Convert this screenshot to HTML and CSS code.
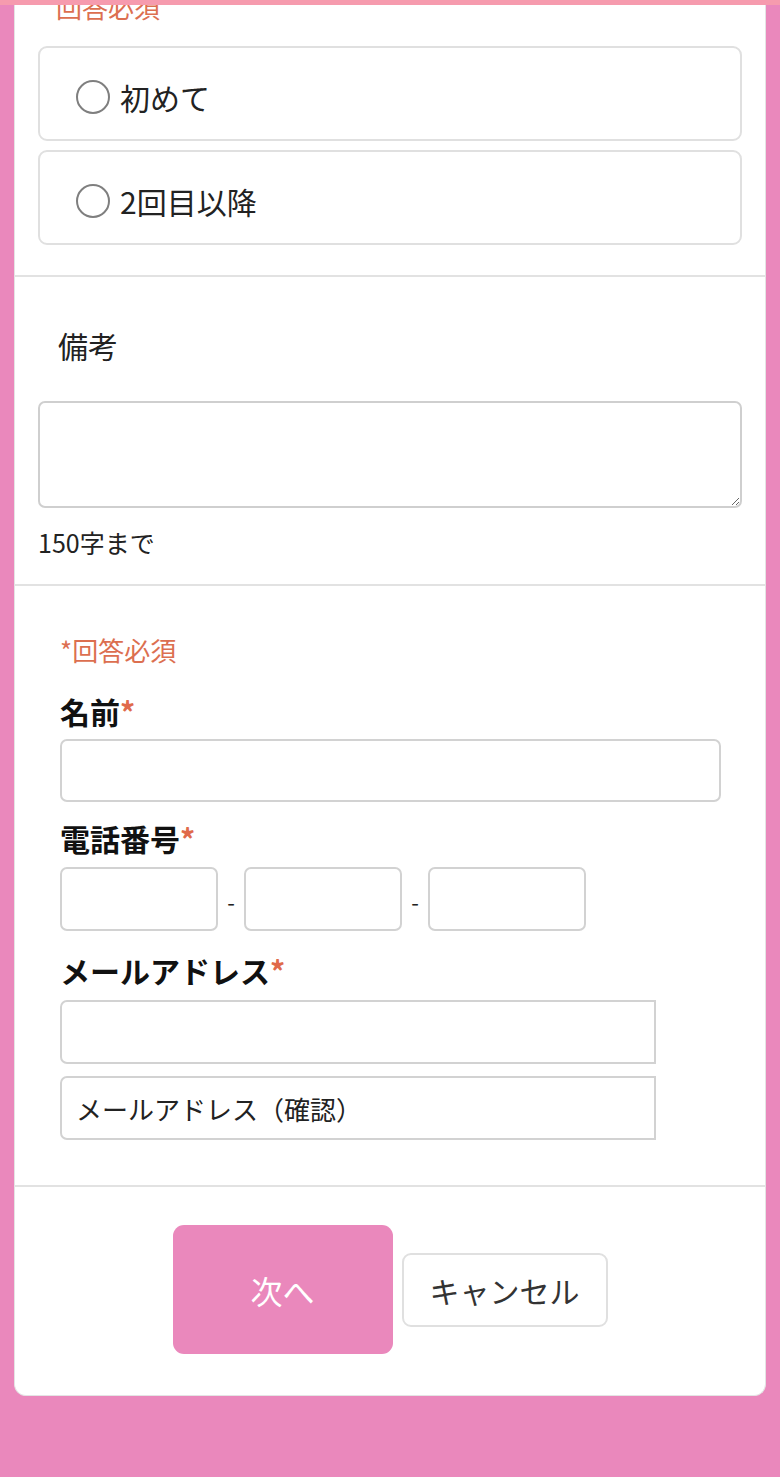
FILE: index.html
```html
<!DOCTYPE html>
<html lang="ja">
<head>
<meta charset="utf-8">
<title>フォーム</title>
<link rel="stylesheet" href="styles.css">
</head>
<body>
<div class="topbar"></div>
<main class="card">
  <section class="sec sec-options">
    <p class="req-note req-top">回答必須</p>
    <div class="options">
      <label class="option"><input type="radio" name="visit" class="radio"><span class="opt-text">初めて</span></label>
      <label class="option"><input type="radio" name="visit" class="radio"><span class="opt-text">2回目以降</span></label>
    </div>
  </section>
  <section class="sec sec-note">
    <p class="note-label">備考</p>
    <textarea class="textarea"></textarea>
    <p class="hint">150字まで</p>
  </section>
  <section class="sec sec-contact">
    <p class="req-note">*回答必須</p>
    <p class="field-label label-name">名前<span class="star">*</span></p>
    <input class="input input-full" type="text">
    <p class="field-label label-tel">電話番号<span class="star">*</span></p>
    <div class="tel-row">
      <input class="input input-tel" type="text">
      <span class="dash">-</span>
      <input class="input input-tel" type="text">
      <span class="dash">-</span>
      <input class="input input-tel" type="text">
    </div>
    <p class="field-label label-mail">メールアドレス<span class="star">*</span></p>
    <input class="input input-mail" type="text">
    <input class="input input-mail input-mail2" type="text" placeholder="メールアドレス（確認）">
  </section>
  <section class="sec sec-actions">
    <button class="btn btn-next" type="button">次へ</button>
    <button class="btn btn-cancel" type="button">キャンセル</button>
  </section>
</main>
</body>
</html>
```

FILE: styles.css
```css
* { box-sizing: border-box; }
html, body { margin: 0; padding: 0; }
body {
  background: #ea88bc;
  font-family: "Noto Sans CJK JP", "Noto Sans", sans-serif;
  color: #222;
  height: 1477px;
  overflow: hidden;
}
p { margin: 0; }
.topbar {
  position: fixed;
  top: 0; left: 0; right: 0;
  height: 5px;
  background: #f69bae;
  z-index: 5;
}
.card {
  margin: -30px 14px 0 14px;
  background: #fff;
  border-left: 1px solid #e4e4e4;
  border-right: 1px solid #e4e4e4;
  border-bottom: 1px solid #e4e4e4;
  border-radius: 0 0 12px 12px;
}
.sec { border-bottom: 2px solid #e2e2e2; }
.sec:last-child { border-bottom: none; }

.req-note {
  color: #dc6f50;
  font-size: 26px;
  line-height: 34px;
}
.sec-options { padding: 20px 23px 30px 23px; }
.req-top { padding-left: 18px; }
.options { margin-top: 22px; display: flex; flex-direction: column; gap: 9px; }
.option {
  height: 95px;
  border: 2px solid #e0e0e0;
  border-radius: 9px;
  display: flex;
  align-items: center;
  padding: 6px 0 0 36px;
}
.radio {
  appearance: none;
  -webkit-appearance: none;
  margin: 0;
  width: 34px;
  height: 34px;
  border: 2px solid #7f7f7f;
  border-radius: 50%;
  background: #fff;
  flex: none;
}
.opt-text {
  margin-left: 10px;
  font-size: 30px;
  line-height: 40px;
  color: #222;
}

.sec-note { padding: 48px 23px 26px 23px; }
.note-label { font-size: 30px; line-height: 40px; padding-left: 20px; color: #222; }
.textarea {
  display: block;
  width: 100%;
  height: 107px;
  margin-top: 36px;
  border: 2px solid #cfcfcf;
  border-radius: 7px;
  resize: vertical;
  font-family: inherit;
}
.hint { margin-top: 18px; font-size: 25px; line-height: 32px; color: #222; }

.sec-contact { padding: 47px 45px 45px 45px; }
.field-label { font-size: 30px; line-height: 38px; font-weight: 700; color: #111; }
.star { color: #e06a4a; font-weight: 700; }
.label-name { margin-top: 25px; }
.label-tel { margin-top: 17px; }
.label-mail { margin-top: 20px; }
.input {
  display: block;
  height: 64px;
  border: 2px solid #d2d2d2;
  border-radius: 7px;
  background: #fff;
  font-family: inherit;
  font-size: 26px;
  padding: 0 14px;
  color: #222;
}
.input-full { width: 661px; height: 63px; margin-top: 9px; }
.tel-row { display: flex; align-items: center; margin-top: 10px; }
.input-tel { width: 158px; }
.dash { width: 26px; text-align: center; font-size: 22px; line-height: 30px; padding-top: 4px; color: #222; }
.input-mail { width: 596px; margin-top: 11px; border-radius: 7px 0 0 7px; }
.input-mail2 { margin-top: 12px; }
.input-mail2::placeholder { color: #222; opacity: 1; }

.sec-actions {
  padding: 38px 0 41px 0;
  display: flex;
  justify-content: center;
  align-items: center;
  gap: 9px;
}
.btn { font-family: inherit; cursor: pointer; }
.btn-next {
  width: 220px;
  height: 129px;
  background: #ea88bc;
  color: #fff;
  border: none;
  border-radius: 11px;
  font-size: 32px;
}
.btn-cancel {
  width: 206px;
  height: 74px;
  background: #fff;
  color: #333;
  border: 2px solid #e0e0e0;
  border-radius: 9px;
  font-size: 30px;
}
```
